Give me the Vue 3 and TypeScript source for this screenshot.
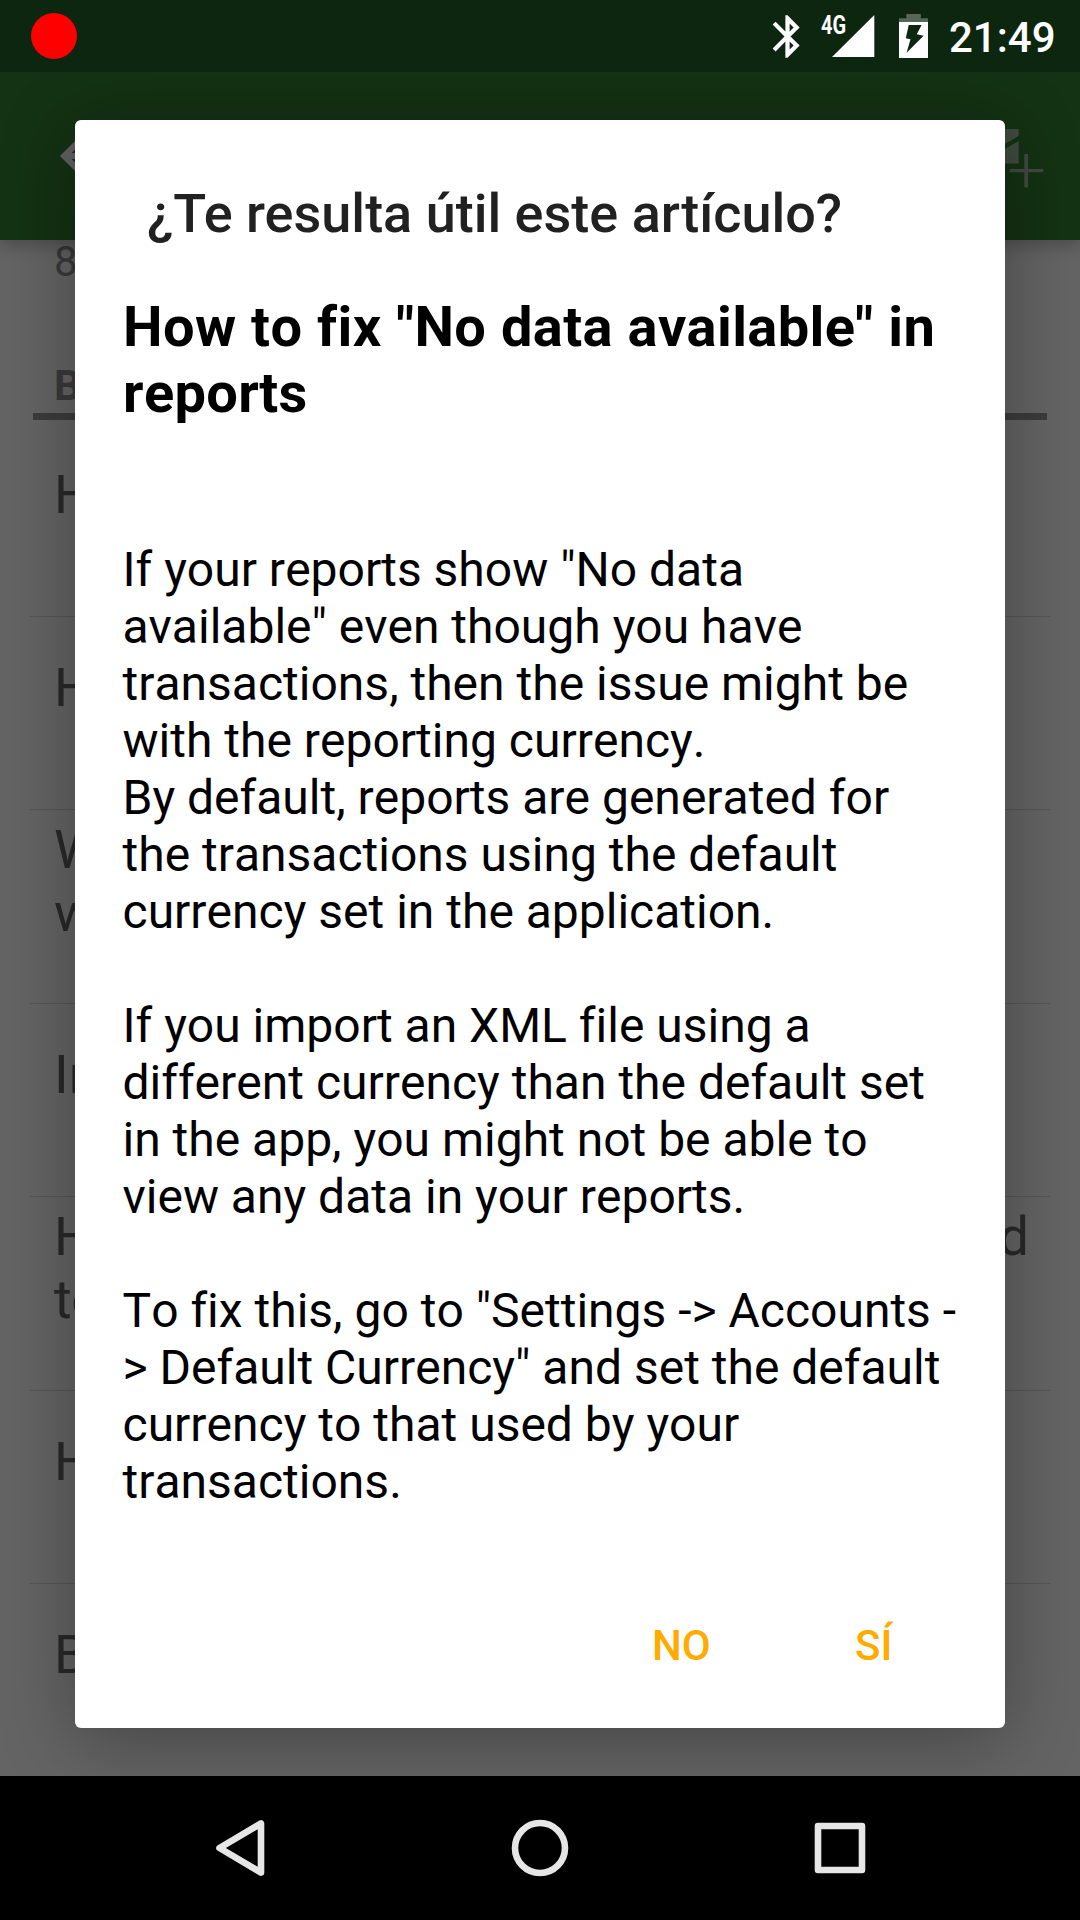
<script setup lang="ts">
interface Row {
  lines: string[]
  end?: string
}

const rows: Row[] = [
  { lines: ['H'] },
  { lines: ['H'] },
  { lines: ['W', 'w'] },
  { lines: ['In'] },
  { lines: ['H', 'to'], end: 'd' },
  { lines: ['H'] },
  { lines: ['B'] },
]

const articleLines: string[] = [
  'If your reports show "No data',
  'available" even though you have',
  'transactions, then the issue might be',
  'with the reporting currency.',
  'By default, reports are generated for',
  'the transactions using the default',
  'currency set in the application.',
  '',
  'If you import an XML file using a',
  'different currency than the default set',
  'in the app, you might not be able to',
  'view any data in your reports.',
  '',
  'To fix this, go to "Settings -> Accounts -',
  '> Default Currency" and set the default',
  'currency to that used by your',
  'transactions.',
]
</script>

<template>
  <div class="screen">
    <header class="status">
      <span class="record"></span>
      <div class="status-right">
        <svg class="bt" width="51" height="51" viewBox="0 0 24 24">
          <path
            fill="#fff"
            d="M17.71 7.71L12 2h-1v7.59L6.41 5 5 6.41 10.59 12 5 17.59 6.41 19 11 14.41V22h1l5.71-5.71-4.3-4.29 4.3-4.29zM13 5.83l1.88 1.88L13 9.59V5.83zm1.88 10.46L13 18.17v-3.76l1.88 1.88z"
          />
        </svg>
        <div class="signal">
          <span class="net">4G</span>
          <svg width="43" height="42" viewBox="0 0 43 42"><path fill="#fff" d="M42.3 0v42H0z" /></svg>
        </div>
        <svg class="battery" width="29" height="44" viewBox="0 0 29 44">
          <path fill="#56675a" d="M7.3 0h14.5v4.2H29V8H0V4.2h7.3z" />
          <path fill="#fff" fill-rule="evenodd" d="M0 8h29v36H0zM9.700 11L6.800 24.200 11.500 25.200 7.600 38.800 24.600 21.700 17.800 20.300 22.600 11z" />
        </svg>
        <span class="time">21:49</span>
      </div>
    </header>

    <nav class="toolbar">
      <svg width="72" height="72" viewBox="0 0 24 24">
        <path fill="#616161" d="M20 11H7.83l5.59-5.59L12 4l-8 8 8 8 1.41-1.41L7.83 13H20v-2z" />
      </svg>
      <svg width="76" height="60" viewBox="0 0 76 60">
        <path fill="#3f4a40" d="M0 0H50.700V7L25 21.500 0 7zM0 12L25 26.500 50.700 12V34.500H0z" />
        <path fill="#3f4a40" d="M56.300 25h3.800v15h15v3.200h-15v15.200h-3.800v-15.200h-14.700V40h14.700z" />
      </svg>
    </nav>

    <main class="page">
      <div class="count">8</div>
      <div class="section">B</div>
      <div class="rule"></div>
      <div v-for="(row, i) in rows" :key="i" class="row">
        <div class="row-text">
          <div v-for="line in row.lines" :key="line">{{ line }}</div>
        </div>
        <div v-if="row.end" class="row-end">{{ row.end }}</div>
      </div>
    </main>

    <section class="dialog">
      <h1 class="title">¿Te resulta útil este artículo?</h1>
      <h2 class="heading">How to fix "No data available" in<br />reports</h2>
      <div class="article">
        <div v-for="(line, i) in articleLines" :key="i" class="line">{{ line }}</div>
      </div>
      <div class="actions">
        <span class="no">NO</span>
        <span>SÍ</span>
      </div>
    </section>

    <footer class="navbar">
      <svg width="60" height="60" viewBox="0 0 60 60">
        <path d="M51 5.400V54.600L9.500 30z" />
      </svg>
      <svg width="60" height="60" viewBox="0 0 60 60"><circle cx="30" cy="30" r="25" /></svg>
      <svg width="60" height="60" viewBox="0 0 60 60"><rect x="8" y="8" width="44" height="44" /></svg>
    </footer>
  </div>
</template>

<style>
body {
  margin: 0;
  background: #000;
}
</style>

<style scoped>
.screen {
  position: relative;
  width: 1080px;
  height: 1920px;
  overflow: hidden;
  display: flex;
  flex-direction: column;
  font-family: Roboto, sans-serif;
  font-variant-ligatures: none;
  background: #646464;
}
.status {
  position: relative;
  z-index: 3;
  flex: none;
  height: 72px;
  box-sizing: border-box;
  padding: 0 24px 0 31px;
  display: flex;
  justify-content: space-between;
  align-items: center;
  background: #0d260f;
}
.record {
  width: 46px;
  height: 46px;
  border-radius: 50%;
  background: #f00;
}
.status-right {
  display: flex;
  align-items: flex-start;
  height: 72px;
  color: #fff;
}
.bt {
  margin-top: 11px;
  margin-right: 8px;
}
.signal {
  display: flex;
  position: relative;
  padding: 15px 24px 0 11px;
}
.net {
  position: absolute;
  left: 0;
  top: 11px;
  font-size: 25px;
  line-height: 29px;
  font-weight: 700;
  transform: scaleX(0.8);
  transform-origin: 0 0;
}
.battery {
  margin-top: 14px;
  margin-right: 21px;
}
.time {
  width: 107px;
  font-size: 42px;
  line-height: 49px;
  font-weight: 500;
  margin-top: 13px;
}
.toolbar {
  position: relative;
  z-index: 1;
  flex: none;
  height: 168px;
  box-sizing: border-box;
  padding: 48px 36px 0 48px;
  display: flex;
  justify-content: space-between;
  background: #143214;
  box-shadow: 0 5px 16px rgba(0, 0, 0, 0.25);
}
.toolbar svg + svg {
  margin-top: 9px;
}
.page {
  position: relative;
  flex: none;
  height: 1536px;
  color: #292929;
}
.count {
  margin-top: -3px;
  padding-left: 54px;
  font-size: 42px;
  line-height: 49px;
  color: #3a3a3a;
}
.section {
  margin-top: 75px;
  padding-left: 54px;
  font-size: 42px;
  line-height: 49px;
  font-weight: 700;
  color: #3a3a3a;
}
.rule {
  margin: 3px 33px 3px;
  height: 7px;
  background: #3c3c3c;
}
.row {
  height: 193.5px;
  margin: 0 30px;
  padding: 0 21px 50px 24px;
  box-sizing: border-box;
  border-bottom: 1px solid #565656;
  display: flex;
  justify-content: space-between;
  align-items: center;
  font-size: 54px;
  line-height: 63px;
}
.row:last-child {
  border-bottom: 0;
  padding-bottom: 52px;
}
.row-end {
  align-self: flex-start;
  margin-top: 8px;
}
.dialog {
  position: absolute;
  z-index: 2;
  left: 75px;
  top: 120px;
  width: 930px;
  height: 1608px;
  box-sizing: border-box;
  padding-top: 62px;
  border-radius: 6px;
  background: #fff;
  box-shadow: 0 12px 76px rgba(0, 0, 0, 0.32);
}
.title {
  margin: 0 0 49px 72px;
  font-size: 54px;
  line-height: 63px;
  font-weight: 500;
  color: #212121;
}
.heading {
  margin: 0 0 115px 48px;
  font-size: 56px;
  line-height: 66px;
  font-weight: 700;
  font-kerning: none;
  letter-spacing: 0.37px;
  word-spacing: 0.4px;
  color: #000;
  white-space: nowrap;
}
.article {
  margin-left: 47.5px;
  font-size: 48px;
  line-height: 57px;
  font-kerning: none;
  color: #000;
}
.line {
  height: 57px;
  white-space: nowrap;
}
.actions {
  margin-top: 111px;
  padding-left: 577px;
  display: flex;
  font-size: 42px;
  line-height: 49px;
  font-weight: 500;
  color: #ffab00;
}
.no {
  width: 203px;
}
.navbar {
  position: relative;
  z-index: 3;
  flex: none;
  height: 144px;
  display: flex;
  justify-content: center;
  align-items: center;
  gap: 240px;
  background: #000;
}
.navbar svg {
  fill: none;
  stroke: #e6e6e6;
  stroke-width: 6.6;
  stroke-linejoin: round;
}
</style>
